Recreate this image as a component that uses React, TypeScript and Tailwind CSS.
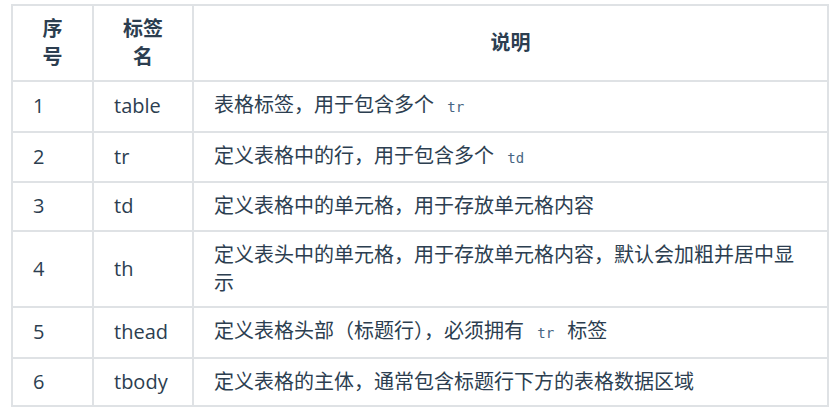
const rows: { no: string; tag: string; desc: React.ReactNode }[] = [
  { no: "1", tag: "table", desc: <>表格标签，用于包含多个 <Code>tr</Code></> },
  { no: "2", tag: "tr", desc: <>定义表格中的行，用于包含多个 <Code>td</Code></> },
  { no: "3", tag: "td", desc: "定义表格中的单元格，用于存放单元格内容" },
  { no: "4", tag: "th", desc: "定义表头中的单元格，用于存放单元格内容，默认会加粗并居中显示" },
  { no: "5", tag: "thead", desc: <>定义表格头部（标题行），必须拥有 <Code>tr</Code> 标签</> },
  { no: "6", tag: "tbody", desc: "定义表格的主体，通常包含标题行下方的表格数据区域" },
];

function Code({ children }: { children: React.ReactNode }) {
  return (
    <code className="mx-[2px] px-[6px] font-['DejaVu_Sans_Mono',monospace] text-[14px] text-[#476582]">
      {children}
    </code>
  );
}

export default function App() {
  return (
    <div className="h-[409px] w-[837px] overflow-hidden bg-white pl-[11px] pt-[4px] font-['Open_Sans','Noto_Sans_CJK_SC',sans-serif] text-[20px] leading-[28px] text-[#2c3e50]">
      <table className="w-[818px] table-fixed border-collapse">
        <colgroup>
          <col className="w-[81px]" />
          <col className="w-[100px]" />
          <col />
        </colgroup>
        <thead>
          <tr>
            {["序号", "标签名", "说明"].map((h) => (
              <th key={h} className="border-2 border-[#dfe2e5] px-[20px] py-[9px] text-center font-bold">
                {h}
              </th>
            ))}
          </tr>
        </thead>
        <tbody>
          {rows.map((r) => (
            <tr key={r.no}>
              <td className="border-2 border-[#dfe2e5] px-[20px] py-[9.25px]">{r.no}</td>
              <td className="border-2 border-[#dfe2e5] px-[20px] py-[9.25px]">{r.tag}</td>
              <td className="border-2 border-[#dfe2e5] px-[20px] py-[9.25px]">{r.desc}</td>
            </tr>
          ))}
        </tbody>
      </table>
    </div>
  );
}
